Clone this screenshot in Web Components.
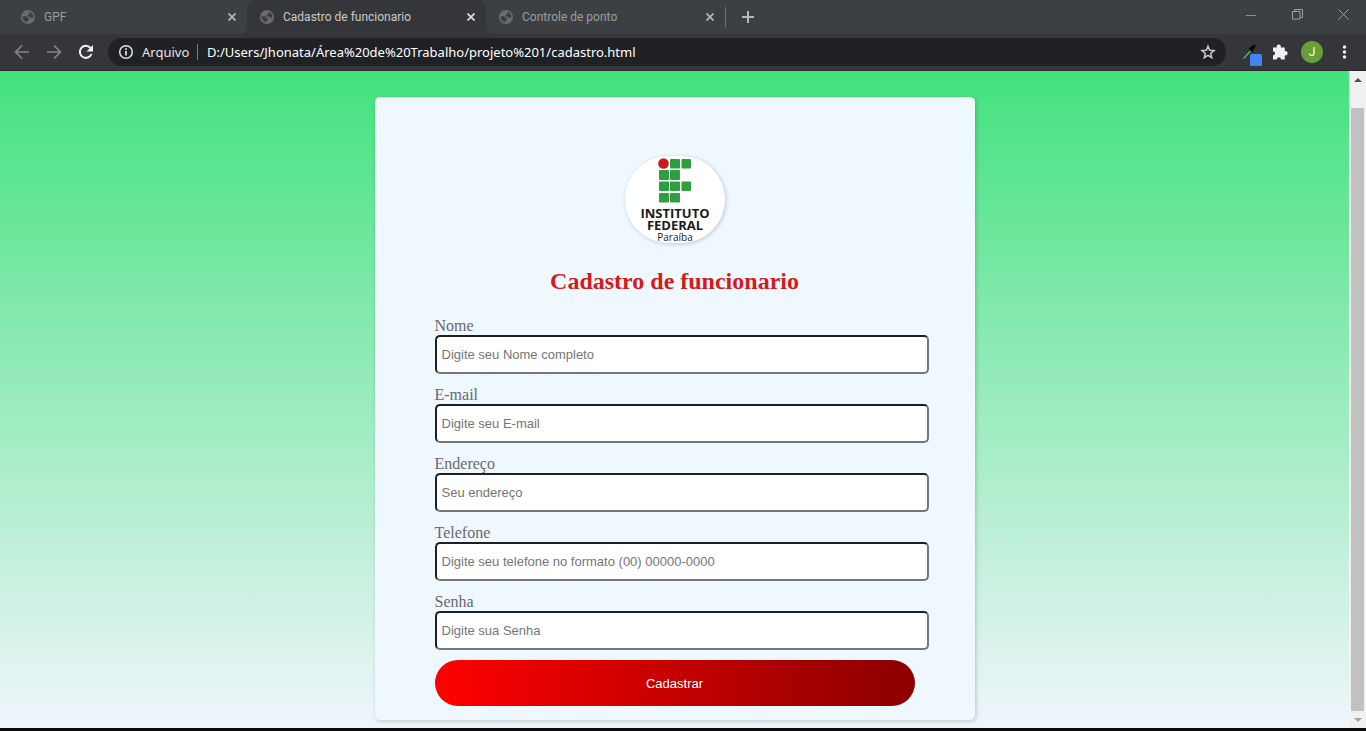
<!DOCTYPE html>
<html lang="pt-BR">
<head>
<meta charset="utf-8">
<title>Cadastro de funcionario</title>
<style>
html, body { margin: 0; height: 100%; }
body { font-family: "Liberation Serif", "Times New Roman", serif; background: #0c0c0f; }
</style>
</head>
<body>
<browser-window>
  <browser-tab slot="tab">GPF</browser-tab>
  <browser-tab slot="tab" active>Cadastro de funcionario</browser-tab>
  <browser-tab slot="tab">Controle de ponto</browser-tab>
  <address-bar slot="toolbar" origin="Arquivo" url="D:/Users/Jhonata/Área%20de%20Trabalho/projeto%201/cadastro.html"></address-bar>
  <signup-card>
    <institute-logo slot="logo"></institute-logo>
    <span slot="title">Cadastro de funcionario</span>
    <form-field label="Nome" hint="Digite seu Nome completo"></form-field>
    <form-field label="E-mail" type="email" hint="Digite seu E-mail"></form-field>
    <form-field label="Endereço" hint="Seu endereço"></form-field>
    <form-field label="Telefone" type="tel" hint="Digite seu telefone no formato (00) 00000-0000"></form-field>
    <form-field label="Senha" type="password" hint="Digite sua Senha"></form-field>
    <submit-button slot="action">Cadastrar</submit-button>
  </signup-card>
</browser-window>

<script>
const define = (name, html, setup) => {
  const template = document.createElement('template');
  template.innerHTML = html;
  customElements.define(name, class extends HTMLElement {
    constructor() {
      super();
      this.attachShadow({ mode: 'open' }).append(template.content.cloneNode(true));
    }
    connectedCallback() { if (setup) setup(this, this.shadowRoot); }
  });
};

define('browser-tab', `
<style>
  :host { display: flex; align-items: center; box-sizing: border-box; width: 239px; height: 34px;
    padding: 0 8px 0 13px; position: relative; color: #9a9da1; font: 12px/16px Roboto, sans-serif; }
  :host([active]) { background: #35363a; border-radius: 8px 8px 0 0; color: #c8cacd; z-index: 1; }
  :host([active])::before, :host([active])::after { content: ""; position: absolute; bottom: 0; width: 8px; height: 8px; }
  :host([active])::before { right: 100%; background: radial-gradient(circle at 0 0, transparent 8px, #35363a 8px); }
  :host([active])::after { left: 100%; background: radial-gradient(circle at 100% 0, transparent 8px, #35363a 8px); }
  .globe { width: 14px; height: 14px; margin-right: 9px; flex: none; }
  .title { flex: 1; white-space: nowrap; overflow: hidden; }
  button { width: 14px; height: 14px; padding: 0; border: 0; background: none; color: #b4b6b9; display: flex; align-items: center; justify-content: center; }
  :host([active]) button { color: #dcdde0; }
</style>
<svg class="globe" viewBox="0 0 14 14"><circle cx="7" cy="7" r="7" fill="#686b70"/>
  <path d="M1.600 6.300H4.500Q6.500 6.500 6.600 8.200H8.200V9.600Q7.800 10.200 6.600 10.200V12.300Q2 12 1.600 6.300z" fill="#3a3d41"/>
  <path d="M8.600 1.900Q12 3 12.400 6.600L11 8.200Q9.600 8.200 9.600 6.800L6.600 6.400V4.800H8V3.400H8.600z" fill="#3a3d41"/></svg>
<span class="title"><slot></slot></span>
<button type="button" aria-label="Fechar guia"><svg width="8" height="8" viewBox="0 0 8 8"><path d="M.5.5l7 7M7.5.5l-7 7" stroke="currentColor" stroke-width="1.700"/></svg></button>
`);

define('tab-strip', `
<style>
  :host { display: flex; align-items: center; height: 34px; padding-left: 8px; background: #3c4043; }
  button { border: 0; padding: 0; background: none; display: flex; align-items: center; justify-content: center; }
  .new { width: 28px; height: 28px; margin-left: 8px; }
  .divider { width: 1px; height: 20px; background: #707377; }
  .controls { display: flex; margin-left: auto; align-self: flex-start; }
  .controls button { width: 46px; height: 28px; }
</style>
<slot></slot>
<span class="divider"></span>
<button class="new" type="button" aria-label="Nova guia"><svg width="12" height="12" viewBox="0 0 12 12"><path d="M6 0v12M0 6h12" stroke="#b4b6b9" stroke-width="2"/></svg></button>
<div class="controls">
  <button type="button" aria-label="Minimizar"><svg width="11" height="11"><path d="M0 6.500h10" stroke="#8b8e91"/></svg></button>
  <button type="button" aria-label="Restaurar"><svg width="11" height="11" fill="none" stroke="#9c9ea1"><path d="M.5 2.500h7.500v7.500h-7.500zM2.500 2.500v-2h8v8h-2.500"/></svg></button>
  <button type="button" aria-label="Fechar"><svg width="11" height="11"><path d="M.5.5l10 10M10.500.5l-10 10" stroke="#9c9ea1"/></svg></button>
</div>
`);

define('address-bar', `
<style>
  :host { display: flex; align-items: center; flex: 1; box-sizing: border-box; height: 28px; padding: 0 10px;
    border-radius: 14px; background: #202124; color: #e4e5e7; font: 13px/20px "Noto Sans", sans-serif; }
  label { display: flex; align-items: center; width: 79px; }
  label svg { margin-right: 8px; flex: none; }
  .divider { width: 1px; height: 16px; background: #77797d; margin-right: 9px; }
  input { flex: 1; min-width: 0; border: 0; padding: 0; margin: 0; background: none; color: #fff; font: inherit; outline: 0; }
  button { border: 0; padding: 0; background: none; width: 16px; height: 16px; display: flex; }
</style>
<label for="url"><svg width="16" height="16" viewBox="0 0 16 16"><circle cx="8" cy="8" r="6.300" fill="none" stroke="#e2e3e5" stroke-width="1.500"/><path d="M8 4.300v1.700M8 7v4.600" stroke="#e2e3e5" stroke-width="1.700"/></svg><span id="origin"></span></label>
<span class="divider"></span>
<input id="url" type="text" spellcheck="false">
<button type="button" aria-label="Favoritar"><svg width="16" height="16" viewBox="0 0 16 16"><path d="M8 2.200l1.700 4 4.300.4-3.300 2.800 1 4.200L8 11.400l-3.700 2.200 1-4.200L2 6.600l4.300-.4z" fill="none" stroke="#c9cbce" stroke-width="1.500"/></svg></button>
`, (el, root) => {
  root.getElementById('origin').textContent = el.getAttribute('origin');
  root.getElementById('url').value = el.getAttribute('url');
});

define('tool-bar', `
<style>
  :host { display: flex; align-items: center; height: 36px; padding: 0 13px 0 14px; background: #35363a; border-bottom: 1px solid #28292c; }
  button { border: 0; padding: 0; background: none; width: 16px; height: 16px; display: flex; flex: none; margin-right: 16px; }
  .reload { margin-right: 14px; }
  .picker { width: 20px; height: 22px; margin: 0 10px 4px 16px; align-self: flex-end; }
  .ext { margin-right: 13px; }
  .avatar { width: 22px; height: 22px; border-radius: 50%; background: #689f38; color: #fff; align-items: center;
    justify-content: center; font: 12px/16px Roboto, sans-serif; margin-right: 14px; }
  .menu { margin-right: 0; }
</style>
<button type="button" aria-label="Voltar"><svg width="16" height="16"><path d="M15 8H2M8 1.500L1.500 8L8 14.500" fill="none" stroke="#85878a" stroke-width="1.700"/></svg></button>
<button type="button" aria-label="Avançar"><svg width="16" height="16"><path d="M1 8h13M8 1.500L14.500 8L8 14.500" fill="none" stroke="#85878a" stroke-width="1.700"/></svg></button>
<button class="reload" type="button" aria-label="Recarregar"><svg width="16" height="16"><path d="M13.500 10A6 6 0 1 1 12.500 4" fill="none" stroke="#f1f1f2" stroke-width="2"/><path d="M15 1v6.500H8.500z" fill="#f1f1f2"/></svg></button>
<slot></slot>
<button class="picker" type="button" aria-label="Conta-gotas"><svg width="20" height="22" viewBox="0 0 20 22">
  <path d="M1 15.500L1.500 13 8.500 5 10.500 7 4 13z" fill="#26352c"/><path d="M1.500 14.500L8.500 7" stroke="#68b889" stroke-width="1.200"/><path d="M6.500 4.500L8.500 3 11 1Q13.500 0 13.500 2T12 5L10.500 8.500 9 7z" fill="#050505"/>
  <rect x="8" y="10" width="12" height="12" rx="1.500" fill="#4285f4"/></svg></button>
<button class="ext" type="button" aria-label="Extensões"><svg width="16" height="16" viewBox="0 0 16 16"><path d="M1 3.500h3.700a2.200 2.200 0 1 1 4.100 0h4v3.700a2.200 2.200 0 1 1 0 4.200v4H9a2.100 2.100 0 0 0-4.200 0H1v-4a2.100 2.100 0 0 0 0-4.200z" fill="#f1f1f2"/></svg></button>
<button class="avatar" type="button" aria-label="Perfil">J</button>
<button class="menu" type="button" aria-label="Menu"><svg width="16" height="16" fill="#f1f1f2"><circle cx="7.500" cy="3" r="1.700"/><circle cx="7.500" cy="8" r="1.700"/><circle cx="7.500" cy="13" r="1.700"/></svg></button>
`);

define('scroll-rail', `
<style>
  :host { display: flex; flex-direction: column; align-items: center; width: 17px; flex: none; background: #f1f1f1; }
  button { border: 0; padding: 0; background: none; width: 17px; height: 17px; display: flex; align-items: center; justify-content: center; flex: none; }
  .thumb { width: 13px; flex: 1; margin-top: 20px; background: #c1c1c1; }
</style>
<button type="button" aria-label="Rolar para cima"><svg width="8" height="4"><path d="M0 4L4 0L8 4z" fill="#505050"/></svg></button>
<div class="thumb"></div>
<button type="button" aria-label="Rolar para baixo"><svg width="8" height="4"><path d="M0 0L4 4L8 0z" fill="#a3a3a3"/></svg></button>
`);

define('browser-window', `
<style>
  :host { display: flex; flex-direction: column; box-sizing: border-box; min-height: 100vh; padding-bottom: 3px; }
  main { display: flex; flex: 1; }
  .page { flex: 1; display: flex; justify-content: center; align-items: flex-start; padding: 26px 0 8px;
    background: linear-gradient(#42e27e, #f0f5fc); }
</style>
<tab-strip><slot name="tab"></slot></tab-strip>
<tool-bar><slot name="toolbar"></slot></tool-bar>
<main><div class="page"><slot></slot></div><scroll-rail></scroll-rail></main>
`);

define('institute-logo', `
<style>
  :host { display: block; width: 100px; height: 87px; border-radius: 50px; overflow: hidden; background: #fff; box-shadow: 1px 1px 4px rgba(0, 0, 0, .2); }
  svg { display: block; }
  text { font-family: "Open Sans", sans-serif; text-anchor: middle; fill: #1b1b1b; }
</style>
<svg width="100" height="87" viewBox="0 0 100 87" role="img" aria-label="Instituto Federal Paraíba">
  <circle cx="38.500" cy="7.500" r="5.300" fill="#cd191e"/>
  <g fill="#2f9e41">
    <rect x="45" y="3" width="10" height="9.500" rx="1"/><rect x="56.500" y="3" width="9.500" height="9.500" rx="1"/>
    <rect x="34" y="14" width="10" height="10" rx="1"/><rect x="45" y="14" width="10" height="10" rx="1"/>
    <rect x="34" y="25.500" width="10" height="9.500" rx="1"/><rect x="45" y="25.500" width="10" height="9.500" rx="1"/><rect x="56.500" y="25.500" width="9.500" height="9.500" rx="1"/>
    <rect x="34" y="37" width="10" height="9.500" rx="1"/><rect x="45" y="37" width="10" height="9.500" rx="1"/>
  </g>
  <text x="50" y="62" font-size="13" font-weight="700">INSTITUTO</text>
  <text x="50" y="74" font-size="13" font-weight="700">FEDERAL</text>
  <text x="50" y="85" font-size="10">Paraíba</text>
</svg>
`);

define('form-field', `
<style>
  :host { display: block; margin-bottom: 12px; color: #696969; }
  label { display: block; font-size: 16px; line-height: 18px; }
  input { display: block; width: calc(100% + 14px); height: 39px; box-sizing: border-box; padding: 0 5px; border: 2px solid;
    border-color: #1f2024 #767676 #767676 #1f2024; border-radius: 5px; background: #fff; font: 13px "Liberation Sans", Arial, sans-serif; }
  input::placeholder { color: #757575; }
</style>
<label for="control"></label>
<input id="control">
`, (el, root) => {
  root.querySelector('label').textContent = el.getAttribute('label');
  const input = root.querySelector('input');
  input.type = el.getAttribute('type') || 'text';
  input.placeholder = el.getAttribute('hint');
});

define('submit-button', `
<style>
  :host { display: block; }
  button { display: block; width: 100%; height: 46px; border: 0; border-radius: 23px; color: #fff;
    background: linear-gradient(to right, #f00, #8b0000); font: 13px "Liberation Sans", Arial, sans-serif; }
</style>
<button type="submit"><slot></slot></button>
`);

define('signup-card', `
<style>
  :host { display: block; box-sizing: border-box; width: 600px; padding: 59px 60px 14px; border-radius: 5px;
    background: #f0f8ff; box-shadow: 1px 1px 4px rgba(0, 0, 0, .2); }
  .logo { display: flex; justify-content: center; }
  h1 { margin: 24px 0 22px; text-align: center; color: #d41a1a; font-size: 24px; line-height: 28px; }
  .action { margin-top: -2px; }
</style>
<div class="logo"><slot name="logo"></slot></div>
<h1><slot name="title"></slot></h1>
<form>
  <slot></slot>
  <div class="action"><slot name="action"></slot></div>
</form>
`);
</script>
</body>
</html>
